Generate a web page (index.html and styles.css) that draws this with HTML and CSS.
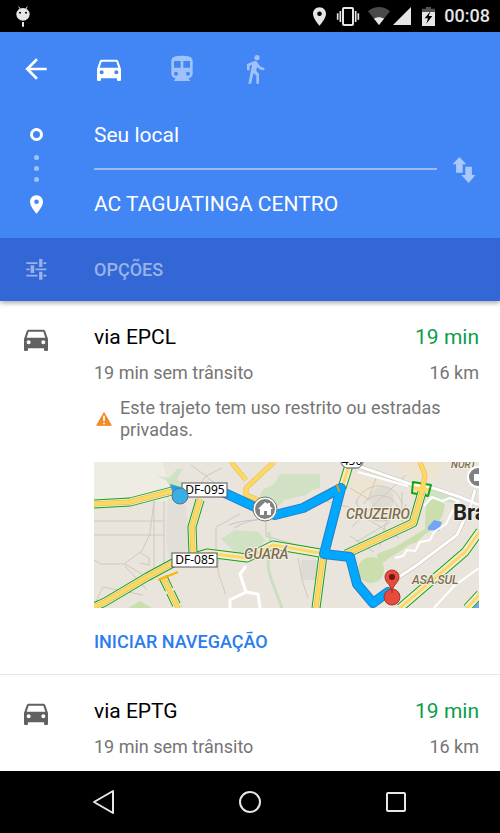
FILE: index.html
```
<!DOCTYPE html>
<html lang="pt-BR">
<head>
  <meta charset="UTF-8">
  <meta name="viewport" content="width=device-width, initial-scale=1.0">
  <title>Rotas</title>
  <link rel="stylesheet" href="styles.css">
</head>
<body>

  <!-- shared shapes -->
  <svg class="defs" width="0" height="0" aria-hidden="true">
    <symbol id="car" viewBox="0 0 24 24">
      <path d="M18.92 6.01C18.72 5.42 18.16 5 17.5 5h-11c-.66 0-1.21.42-1.42 1.01L3 12v8c0 .55.45 1 1 1h1c.55 0 1-.45 1-1v-1h12v1c0 .55.45 1 1 1h1c.55 0 1-.45 1-1v-8l-2.08-5.99zM6.5 16c-.83 0-1.5-.67-1.5-1.5S5.67 13 6.5 13s1.5.67 1.5 1.5S7.33 16 6.5 16zm11 0c-.83 0-1.5-.67-1.5-1.5s.67-1.5 1.5-1.5 1.5.67 1.5 1.5-.67 1.5-1.5 1.5zM5 11l1.5-4.5h11L19 11H5z"/>
    </symbol>
    <symbol id="place" viewBox="5 2 14 20">
      <path d="M12 2C8.13 2 5 5.13 5 9c0 5.25 7 13 7 13s7-7.75 7-13c0-3.87-3.13-7-7-7zm0 9.500a2.500 2.500 0 0 1 0-5 2.500 2.500 0 0 1 0 5z"/>
    </symbol>
  </svg>

  <div class="status">
    <svg class="droid" width="14" height="22" viewBox="0 0 42 66">
      <path d="M8 2l6 9M34 2l-6 9" stroke="#e6e6e6" stroke-width="3"/>
      <ellipse cx="21" cy="25" rx="20" ry="19" fill="#e6e6e6"/>
      <circle cx="12" cy="20" r="3"/><circle cx="30" cy="20" r="3"/>
      <path d="M21 48v14" stroke="#e6e6e6" stroke-width="6"/>
    </svg>
    <div class="status_right">
      <svg class="s_place" width="13" height="19"><use href="#place"/></svg>
      <svg class="s_vibrate" width="24" height="19" viewBox="0 0 72 57">
        <rect x="21" y="3" width="30" height="51" rx="3" fill="none" stroke="#e6e6e6" stroke-width="6"/>
        <path d="M13 12v33M59 12v33M5 19v19M67 19v19" stroke="#e6e6e6" stroke-width="5"/>
      </svg>
      <svg class="s_wifi" width="22" height="18" viewBox="0 0 66 54">
        <path d="M33 54L0 13C19-4 47-4 66 13z" fill="#4a4a4a"/>
        <path d="M33 54L18 35c8-6 22-6 30 0z" fill="#e6e6e6"/>
      </svg>
      <svg class="s_signal" width="18" height="18" viewBox="0 0 18 18"><path d="M18 0v18H0z"/></svg>
      <svg class="s_battery" width="13" height="19" viewBox="0 0 39 57">
        <path d="M12 0h15v5h12v12H0V5h12z" fill="#555"/>
        <path d="M0 15h39v42H0z" fill="#e6e6e6"/>
        <path d="M26 12L8 34h10l-5 16 18-23H20z" fill="#000"/>
      </svg>
      <span class="clock">00:08</span>
    </div>
  </div>

  <header>
    <div class="modes">
      <button class="back" aria-label="Voltar">
        <svg width="32" height="32" viewBox="0 0 24 24"><path d="M20 11H7.830l5.590-5.590L12 4l-8 8 8 8 1.410-1.410L7.830 13H20v-2z"/></svg>
      </button>
      <button class="mode active" aria-label="Carro">
        <svg width="32" height="32"><use href="#car"/></svg>
      </button>
      <button class="mode" aria-label="Transporte público">
        <svg width="32" height="32" viewBox="0 0 24 24"><path d="M12 2c-4.420 0-8 .5-8 4v9.500C4 17.430 5.570 19 7.500 19L6 20.500v.5h12v-.5L16.500 19c1.930 0 3.500-1.570 3.500-3.500V6c0-3.500-3.580-4-8-4zM7.500 17c-.83 0-1.500-.67-1.500-1.500S6.670 14 7.500 14s1.500.67 1.500 1.500S8.330 17 7.500 17zm3.500-6H6V6h5v5zm5.500 6c-.83 0-1.500-.67-1.500-1.500s.67-1.500 1.500-1.500 1.500.67 1.500 1.500-.67 1.500-1.500 1.500zm1.500-6h-5V6h5v5z"/></svg>
      </button>
      <button class="mode" aria-label="A pé">
        <svg width="32" height="32" viewBox="0 0 24 24"><path d="M13.500 5.500c1.100 0 2-.9 2-2s-.9-2-2-2-2 .9-2 2 .9 2 2 2zM9.800 8.900L7 23h2.100l1.800-8 2.100 2v6h2v-7.500l-2.100-2 .6-3C14.800 12 16.800 13 19 13v-2c-1.900 0-3.500-1-4.300-2.400l-1-1.600c-.4-.6-1-1-1.700-1-.3 0-.5.1-.8.1L6 8.300V13h2V9.600l1.800-.7"/></svg>
      </button>
    </div>

    <div class="trip">
      <div class="marks">
        <span class="ring"></span>
        <span class="dots"><i></i><i></i><i></i></span>
        <svg width="13" height="19"><use href="#place"/></svg>
      </div>
      <form class="fields">
        <input type="text" name="from" aria-label="Origem" value="Seu local">
        <input type="text" name="to" aria-label="Destino" value="AC TAGUATINGA CENTRO">
      </form>
      <button class="swap" aria-label="Inverter">
        <svg width="24" height="26" viewBox="0 0 70 79"><path d="M21 0l21 22H31v26H11V22H0zM39 30h20v25h11L49 79 27 55h12z"/></svg>
      </button>
    </div>

    <button class="options">
      <svg width="21" height="21" viewBox="0 0 62 64">
        <path d="M0 10h34v5H0zM39 0h10v24H39zM52 10h9v5h-9zM0 29h10v5H0zM13 19h11v24H13zM28 29h33v5H28zM0 48h34v5H0zM39 39h10v24H39zM52 48h9v5h-9z"/>
      </svg>
      <span>OPÇÕES</span>
    </button>
  </header>

  <main>
    <article class="route">
      <svg class="route_icon" width="32" height="32"><use href="#car"/></svg>
      <div class="route_body">
        <div class="title"><span>via EPCL</span><span class="time">19 min</span></div>
        <div class="sub"><span>19 min sem trânsito</span><span>16 km</span></div>
        <div class="warning">
          <svg width="16" height="14" viewBox="0 0 48 42">
            <path d="M24 2L46 40H2z" fill="#f28c28" stroke="#f28c28" stroke-width="3" stroke-linejoin="round"/>
            <path d="M24 11v17M24 32v5" stroke="#fff" stroke-width="5"/>
          </svg>
          <p>Este trajeto tem uso restrito ou estradas privadas.</p>
        </div>

        <svg class="map" viewBox="0 0 385 146" preserveAspectRatio="xMidYMid slice" role="img" aria-label="Mapa da rota">
          <rect width="385" height="146" fill="#e9e5dd"/>
          <path d="M0 0h68l12 35-8 4H0z" fill="#efece4"/>
          <path d="M74 36l18 8 4 40-20 22-4-30z" fill="#e2dfd8"/>
          <path d="M300 0h50l-8 18-30-2zM258 12l30 8-4 20-28-6z" fill="#eee4d2"/>
          <circle cx="288" cy="37" r="12" fill="#dedad4"/>
          <path d="M207 98h17v20h-17z" fill="#dedad4"/>

          <!-- parks and water -->
          <g fill="#cbdfae">
            <circle cx="277" cy="108" r="13"/>
            <path d="M332 40l8-3 11 5-2 10-7 14-11 6-8 8-10 4-8 6-10 6-6 5-5-1-1-8 20-8 28-17z"/>
            <path d="M34 146l12-7 12 7z"/>
          </g>
          <g fill="#d0e2c3">
            <path d="M180 22l6-10h40v14l-8 2-6 5-22 5-9 10-17-8 4-12z"/>
            <path d="M63 14l12 2 8-9h6l-6 10 10 9-1 9H82L72 18z"/>
            <path d="M127 77l14-9 24 2 6 9-10 9-16 6z"/>
            <path d="M336 26l28 12-6 3-24-8z"/>
          </g>
          <path d="M334 65l6-7 8 2-3 9-11-1zM379 146l6-6v6z" fill="#73a5f5"/>

          <!-- minor streets -->
          <g fill="none" stroke="#cfc9bc" stroke-width="1">
            <path d="M0 59h69M0 73h70M60 39v69M70 39v66M60 39l-4 32-8 18-18 13M0 98l7 4h24l20 12M31 104l22 24M47 91l8 5v7l-9-2M9 125l40 8M9 125L0 143M97 3l15 11 16-8M112 14l-14 20M112 14l24 20M127 90c-8 22 2 28 4 42M146 52l-24 13v22M172 48v26l55 16M204 96l4 22 6 18M228 38l30 8M258 65l28-28 26-24M262 42c6-24 40-24 46 0M270 42c6-12 28-12 34 4M265 52l40 24M256 74l24 16M282 16l-8 22M256 26l20 12M308 30v30M294 52l-8 32M262 80l34-20M262 38a26 26 0 0 0 50 4"/>
          </g>
          <path d="M174 70c6 10 0 20 0 32s8 26 14 44" fill="none" stroke="#cbdfc0" stroke-width="3"/>
          <path d="M135 63c20-8 40-2 60-14M140 66c20-12 30-6 42-14" fill="none" stroke="#c3c6ce" stroke-width="1"/>
          <g fill="none" stroke="#c3beb3" stroke-width="4">
            <path d="M264 4l55 19 17 2 30 10 19 8"/>
            <path d="M293 123l30-20 40-30 14-30 4-15"/>
          </g>
          <g fill="none" stroke="#fff" stroke-width="3">
            <path d="M264 4l55 19 17 2 30 10 19 8M293 123l30-20 40-30 14-30 4-15"/>
            <path d="M264 10l50 14M330 44l8-9 10 4 8-3 10 4" stroke-width="2"/>
            <path d="M301 96l8-2 4-6 8 1 5-9 10-2 4-8 12-8 12-24" stroke-width="2"/>
            <path d="M340 146l20-22 25-18M325 130l30-28 30-24" stroke-width="2"/>
            <path d="M152 104l-6 8 6 18-16 8v8M152 130l12 2 2 14"/>
          </g>

          <!-- main roads with green traffic -->
          <g fill="none" stroke-linejoin="round">
            <g stroke="#17a30f" stroke-width="9">
              <path d="M0 42l36-2 42-11"/>
              <path d="M106 38l-8 27 1 27"/>
              <path d="M0 145l11-5 42-25 26-14 34-10 40 5 26-13 47 8"/>
              <path d="M69 115l15 31" stroke-dasharray="14 3"/>
              <path d="M256 0l-8 26M229 93l-7 53"/>
              <path d="M252 92l67-31 9-31"/>
              <path d="M306 146l65-56 15-21M373 146l13-14"/>
              <path d="M319 20l18 3-3 11-16-3z" stroke-width="2"/>
            </g>
            <g stroke="#f0ebdf" stroke-width="7">
              <path d="M0 42l36-2 42-11"/>
              <path d="M106 38l-8 27 1 27"/>
              <path d="M0 145l11-5 42-25 26-14 34-10 40 5 26-13 47 8"/>
              <path d="M69 115l15 31"/>
              <path d="M256 0l-8 26M229 93l-7 53"/>
              <path d="M252 92l67-31 9-31"/>
              <path d="M306 146l65-56 15-21M373 146l13-14"/>
            </g>
            <g stroke="#dcb75c" stroke-width="5">
              <path d="M0 42l36-2 42-11M106 37l-8 28 1 27M0 145l11-5 42-25 26-14M69 115l15 31M252 92l67-31 9-31 3-17-5-13M137 0l15 18M180 0l-28 26v7l15 6M222 146l7-53"/>
            </g>
            <g stroke="#ffd95f" stroke-width="4">
              <path d="M0 42l36-2 42-11 50 1M106 37l-8 28 1 27M0 145l11-5 42-25 26-14M69 115l15 31M252 92l67-31 9-31 3-17-5-13M137 0l15 18M180 0l-28 26v7l15 6M222 146l7-53"/>
              <path d="M113 91l40 5 26-13 47 8M256 0l-8 26M306 146l65-56 15-21M373 146l13-14" stroke-width="3"/>
              <path d="M320 26l14 2"/>
            </g>
            <path d="M64 118l20-8" stroke="#ffb400" stroke-width="2"/>
          </g>

          <!-- chosen route -->
          <g fill="none" stroke-linejoin="round" stroke-linecap="round">
            <path d="M126 29l7 3 28 13 20 8 28-7 38-20-17 66 26 3 7 27 16 19 15-11" stroke="#2a7cc4" stroke-width="10"/>
            <path d="M126 29l7 3 28 13 20 8 28-7 38-20-17 66 26 3 7 27 16 19 15-11" stroke="#00a8ff" stroke-width="8"/>
            <path d="M243 23l2 6" stroke="#e8961e" stroke-width="2"/>
          </g>

          <!-- labels -->
          <g class="place_name">
            <text x="150" y="97" font-size="14">GUARÁ</text>
            <text x="252" y="57" font-size="14">CRUZEIRO</text>
            <text x="318" y="122" font-size="12">ASA SUL</text>
            <text x="357" y="6" font-size="10">NORT</text>
          </g>
          <text class="city" x="359" y="58">Bra</text>

          <g class="plate">
            <rect x="88" y="21" width="45" height="14"/>
            <text x="111" y="32">DF-095</text>
            <rect x="78" y="91" width="45" height="14"/>
            <text x="101" y="102">DF-085</text>
            <path d="M247-4h22c1 6-2 9-6 10h-10c-4-1-7-4-6-10z"/>
            <text x="258" y="3">450</text>
          </g>

          <!-- start, home and end pins -->
          <path d="M76 22l14 4-10 10z" fill="#2b9fdc"/>
          <circle cx="86" cy="34" r="8" fill="#38b0e6" stroke="#5c7380" stroke-width="1"/>
          <circle cx="171" cy="47" r="11" fill="#808080" stroke="#fff" stroke-width="2"/>
          <circle cx="171" cy="47" r="12" fill="none" stroke="#777" stroke-width="1"/>
          <path d="M171 40l-7 7h2v6h4v-4h3v4h4v-6h2l-3-3v-3h-2v1z" fill="#fff"/>
          <circle cx="384" cy="15" r="10" fill="#808080" stroke="#fff" stroke-width="2"/>
          <path d="M380 12h5v7h-5z" fill="#fff"/>
          <circle cx="298" cy="135" r="8" fill="#e64b3c" stroke="#a8352a" stroke-width="1"/>
          <path d="M298 131c0-8-7-10-7-16a7 7 0 0 1 14 0c0 6-7 8-7 16z" fill="#e64b3c" stroke="#a8352a" stroke-width="1"/>
          <circle cx="298" cy="115" r="3" fill="#6e150f"/>
        </svg>

        <button class="start">INICIAR NAVEGAÇÃO</button>
      </div>
    </article>

    <article class="route">
      <svg class="route_icon" width="32" height="32"><use href="#car"/></svg>
      <div class="route_body">
        <div class="title"><span>via EPTG</span><span class="time">19 min</span></div>
        <div class="sub"><span>19 min sem trânsito</span><span>16 km</span></div>
      </div>
    </article>
  </main>

  <nav>
    <button aria-label="Voltar">
      <svg width="24" height="26" viewBox="0 0 24 26"><path d="M21 2v22L2 13z"/></svg>
    </button>
    <button aria-label="Início">
      <svg width="24" height="24" viewBox="0 0 24 24"><circle cx="12" cy="12" r="10"/></svg>
    </button>
    <button aria-label="Recentes">
      <svg width="22" height="22" viewBox="0 0 22 22"><rect x="2" y="2" width="18" height="18" rx="1"/></svg>
    </button>
  </nav>

</body>
</html>
```

FILE: styles.css
```
* {
  box-sizing: border-box;
}
body {
  display: flex;
  flex-direction: column;
  height: 100vh;
  margin: 0;
  background: #fff;
  color: #000;
  font-family: Roboto, sans-serif;
}
button {
  padding: 0;
  border: 0;
  background: none;
  font-family: inherit;
  cursor: pointer;
}
svg {
  display: block;
}
p {
  margin: 0;
}
.defs {
  position: absolute;
}

/* status bar */
.status {
  display: flex;
  flex: none;
  justify-content: space-between;
  height: 32px;
  padding: 0 10px 0 16px;
  background: #000;
}
.droid {
  margin-top: 6px;
}
.status_right {
  display: flex;
  align-items: center;
  fill: #e6e6e6;
}
.s_vibrate {
  margin-left: 10px;
}
.s_wifi {
  margin-left: 8px;
}
.s_signal {
  margin-left: 3px;
}
.s_battery {
  margin-left: 11px;
}
.clock {
  margin-left: 9px;
  color: #e6e6e6;
  font-size: 18px;
  font-weight: 500;
  line-height: 32px;
}

/* header */
header {
  position: relative;
  flex: none;
  background: #4285f4;
  box-shadow: 0 2px 5px rgba(0, 0, 0, 0.35);
  fill: #fff;
}
.modes {
  display: flex;
  align-items: center;
  gap: 41px;
  height: 69px;
  padding: 5px 20px 0;
}
.mode {
  opacity: 0.5;
}
.mode.active {
  opacity: 1;
}
.trip {
  display: grid;
  grid-template-columns: 73px 1fr 63px;
}
.trip,
.options {
  padding-left: 21px;
}
.marks {
  display: flex;
  flex-direction: column;
  align-items: center;
  justify-content: space-between;
  width: 31px;
  padding: 27px 0 24px;
}
.ring {
  width: 13px;
  height: 13px;
  border: 3px solid #fff;
  border-radius: 50%;
}
.dots {
  display: grid;
  gap: 6px;
}
.dots i {
  width: 5px;
  height: 5px;
  border-radius: 50%;
  background: #a0c2fa;
}
.fields input {
  display: block;
  width: 100%;
  height: 68px;
  padding: 0;
  border: 0;
  outline: 0;
  background: none;
  color: #fff;
  font-family: inherit;
  font-size: 21px;
}
.fields input:first-child {
  height: 69px;
  border-bottom: 2px solid #a0b8ea;
}
.swap {
  padding-right: 10px;
  opacity: 0.55;
}
.swap svg {
  margin: 0 auto;
  fill: #fff;
}
.options {
  display: flex;
  align-items: center;
  gap: 47px;
  width: 100%;
  height: 63px;
  background: #3367d6;
  color: #99b3ea;
  font-size: 18px;
  font-weight: 500;
}
.options svg {
  margin-left: 5px;
  fill: #99b3ea;
}

/* routes */
main {
  flex: 1;
  min-height: 0;
  overflow-y: auto;
  scrollbar-width: none;
}
.route {
  display: flex;
  padding: 22px 21px 0 20px;
}
.route + .route {
  padding-bottom: 20px;
  border-top: 1px solid #e6e6e6;
}
.route_icon {
  flex: none;
  margin-right: 42px;
  fill: #616161;
}
.route_body {
  flex: 1;
  min-width: 0;
}
.title,
.sub {
  display: flex;
  justify-content: space-between;
}
.title {
  font-size: 21px;
  line-height: 28px;
}
.time {
  color: #0b9d4b;
}
.sub {
  margin-top: 11px;
}
.sub,
.warning {
  color: #757575;
  font-size: 18px;
  line-height: 22px;
}
.warning {
  display: flex;
  align-items: center;
  gap: 8px;
  margin-top: 13px;
}
.warning svg {
  flex: none;
  margin-left: 2px;
}
.start {
  height: 66px;
  color: #2a7cf0;
  font-size: 18px;
  font-weight: 500;
}

/* map */
.map {
  width: 100%;
  height: 146px;
  margin-top: 21px;
}
.place_name {
  fill: #7d6c4d;
  stroke: #f3efe6;
  stroke-width: 2px;
  paint-order: stroke;
  font-style: italic;
  font-weight: 500;
}
.city {
  fill: #222;
  stroke: #f3efe6;
  stroke-width: 2px;
  paint-order: stroke;
  font-size: 22px;
  font-weight: 700;
}
.plate rect,
.plate path {
  fill: #fff;
  stroke: #555;
}
.plate text {
  font-family: "Noto Sans", sans-serif;
  font-size: 12px;
  text-anchor: middle;
}

/* system buttons */
nav {
  display: grid;
  flex: none;
  grid-template-columns: repeat(3, 1fr);
  height: 62px;
  padding: 0 31px;
  background: #000;
}
nav button {
  display: flex;
  align-items: center;
  justify-content: center;
}
nav svg {
  fill: none;
  stroke: #e6e6e6;
  stroke-width: 2px;
  stroke-linejoin: round;
}
```
